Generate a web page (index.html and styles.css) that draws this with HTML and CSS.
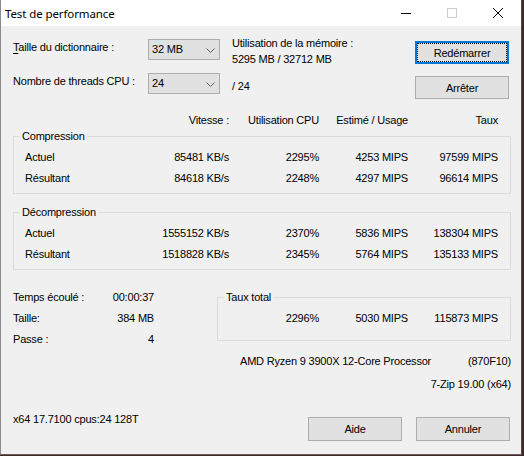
FILE: index.html
```html
<!DOCTYPE html>
<html lang="fr">
<head>
<meta charset="utf-8">
<title>Test de performance</title>
<link rel="stylesheet" href="styles.css">
</head>
<body>
<div class="window">
  <div class="titlebar">
    <span class="title">Test de performance</span>
    <div class="caption">
      <span class="cap"><svg width="10" height="10" viewBox="0 0 10 10"><rect x="0" y="5" width="10" height="1" fill="#000"/></svg></span>
      <span class="cap"><svg width="10" height="10" viewBox="0 0 10 10"><rect x="0.5" y="0.5" width="9" height="9" fill="none" stroke="#cccccc"/></svg></span>
      <span class="cap"><svg width="10" height="10" viewBox="0 0 10 10"><path d="M0 0 L10 10 M10 0 L0 10" stroke="#000" stroke-width="1" fill="none"/></svg></span>
    </div>
  </div>
  <div class="content">
    <div class="top">
      <div class="lbl r1"><u>T</u>aille du dictionnaire :</div>
      <div class="combo r1"><span>32 MB</span><svg width="9" height="5" viewBox="0 0 9 5"><polyline points="0.5,0.5 4.5,4.5 8.5,0.5" fill="none" stroke="#606060"/></svg></div>
      <div class="mem r1"><div>Utilisation de la mémoire :</div><div>5295 MB / 32712 MB</div></div>
      <button class="btn focus r1">Redémarrer</button>
      <div class="lbl r2">Nombre de threads CPU :</div>
      <div class="combo r2"><span>24</span><svg width="9" height="5" viewBox="0 0 9 5"><polyline points="0.5,0.5 4.5,4.5 8.5,0.5" fill="none" stroke="#606060"/></svg></div>
      <div class="maxthreads r2">/ 24</div>
      <button class="btn r2 b2">Arrêter</button>
    </div>

    <div class="cols header">
      <span></span><span class="num">Vitesse :</span><span class="num">Utilisation CPU</span><span class="num">Estimé / Usage</span><span class="num">Taux</span>
    </div>

    <fieldset class="group">
      <legend>Compression</legend>
      <div class="cols row"><span class="name">Actuel</span><span class="num">85481 KB/s</span><span class="num">2295%</span><span class="num">4253 MIPS</span><span class="num">97599 MIPS</span></div>
      <div class="cols row"><span class="name">Résultant</span><span class="num">84618 KB/s</span><span class="num">2248%</span><span class="num">4297 MIPS</span><span class="num">96614 MIPS</span></div>
    </fieldset>

    <fieldset class="group second">
      <legend>Décompression</legend>
      <div class="cols row"><span class="name">Actuel</span><span class="num">1555152 KB/s</span><span class="num">2370%</span><span class="num">5836 MIPS</span><span class="num">138304 MIPS</span></div>
      <div class="cols row"><span class="name">Résultant</span><span class="num">1518828 KB/s</span><span class="num">2345%</span><span class="num">5764 MIPS</span><span class="num">135133 MIPS</span></div>
    </fieldset>

    <div class="bottom">
      <div class="stats">
        <div class="stat"><span>Temps écoulé :</span><span>00:00:37</span></div>
        <div class="stat"><span>Taille:</span><span>384 MB</span></div>
        <div class="stat"><span>Passe :</span><span>4</span></div>
      </div>
      <fieldset class="group total">
        <legend>Taux total</legend>
        <div class="trow"><span class="num">2296%</span><span class="num">5030 MIPS</span><span class="num">115873 MIPS</span></div>
      </fieldset>
    </div>

    <div class="cpu"><span>AMD Ryzen 9 3900X 12-Core Processor</span><span>(870F10)</span></div>
    <div class="ver">7-Zip 19.00 (x64)</div>

    <div class="footer">
      <span class="build">x64 17.7100 cpus:24 128T</span>
      <div class="fbtns">
        <button class="btn fb">Aide</button>
        <button class="btn fb">Annuler</button>
      </div>
    </div>
  </div>
</div>
</body>
</html>
```

FILE: styles.css
```css
* { box-sizing: border-box; }
html, body { margin: 0; padding: 0; }
body {
  width: 524px;
  height: 456px;
  overflow: hidden;
  background: #3f2a2a;
  font-family: "Liberation Sans", Arial, sans-serif;
  font-size: 11px;
  line-height: 13px;
  color: #000;
}
.window {
  width: 522px;
  height: 455px;
  background: #f0f0f0;
  border-left: 1px solid #8a8a8a;
  border-right: 1px solid #5b4444;
  border-bottom: 1px solid #6a5a5a;
  display: flex;
  flex-direction: column;
}
.titlebar {
  height: 26px;
  background: #ffffff;
  display: flex;
  align-items: center;
  flex: none;
}
.title {
  font-family: "Noto Sans", "Open Sans", sans-serif;
  font-size: 11.5px;
  letter-spacing: -0.1px;
  padding-left: 4px;
  color: #000;
}
.caption { margin-left: auto; display: flex; height: 26px; }
.cap {
  width: 46px;
  height: 26px;
  display: flex;
  align-items: center;
  justify-content: center;
}
.cap svg { display: block; }

.content {
  padding: 0 10px 0 12px;
  letter-spacing: -0.2px;
}

/* top area */
.top {
  margin-top: 11px;
  display: grid;
  grid-template-columns: 135px 84px 183px 94px;
  grid-template-rows: 34px auto;
  align-items: start;
}
.r1 { grid-row: 1; }
.r2 { grid-row: 2; }
.lbl { margin-top: 4px; white-space: nowrap; }
.lbl u { text-decoration: underline; text-underline-offset: 2px; }
.combo {
  margin-top: 2px;
  width: 72px;
  height: 21px;
  background: #e1e1e1;
  border: 1px solid #adadad;
  display: flex;
  align-items: center;
  justify-content: space-between;
  padding: 0 4px 0 3px;
}
.combo svg { display: block; margin-top: 1px; }
.mem div + div { margin-top: 3px; }
.maxthreads { margin-top: 9px; }
.btn {
  font-family: "Liberation Sans", Arial, sans-serif;
  font-size: 11px;
  letter-spacing: -0.2px;
  color: #000;
  width: 94px;
  height: 23px;
  background: #e1e1e1;
  border: 1px solid #adadad;
  padding: 0;
  margin: 4px 0 0 0;
}
.btn.focus {
  border: 2px solid #0078d7;
  outline: 1px dotted #000;
  outline-offset: -3px;
}
.btn.b2 { margin-top: 5px; }

/* tables */
.cols {
  display: grid;
  grid-template-columns: 120px 95px 90px 89px 90px;
}
.num { text-align: right; white-space: nowrap; }
.header { margin-top: 15px; padding-left: 1px; }
.group {
  margin: 3px 0 0 0;
  padding: 4px 0 4px 0;
  border: 1px solid #dcdcdc;
  min-width: 0;
}
.group legend {
  padding: 0 2px;
  margin-left: 6px;
  line-height: 13px;
}
.group.second { margin-top: 12px; }
.row { height: 21px; align-items: center; }
.name { padding-left: 11px; }

/* bottom */
.bottom {
  margin-top: 17px;
  display: flex;
  align-items: flex-start;
}
.stats { width: 141px; }
.stat {
  height: 21px;
  display: flex;
  justify-content: space-between;
  align-items: center;
}
.group.total {
  margin: 4px 0 0 63px;
  flex: 1;
  padding: 4px 0 11px 0;
}
.trow {
  display: grid;
  grid-template-columns: 101px 89px 90px;
  height: 21px;
  align-items: center;
}
.cpu {
  margin-top: 5px;
  padding-left: 227px;
  display: flex;
  justify-content: space-between;
}
.ver { margin-top: 10px; text-align: right; }
.footer {
  margin-top: 22px;
  display: flex;
  align-items: flex-start;
}
.build { white-space: nowrap; }
.fbtns {
  margin-left: auto;
  margin-right: 1px;
  display: flex;
  gap: 14px;
}
.btn.fb { height: 24px; }
```
